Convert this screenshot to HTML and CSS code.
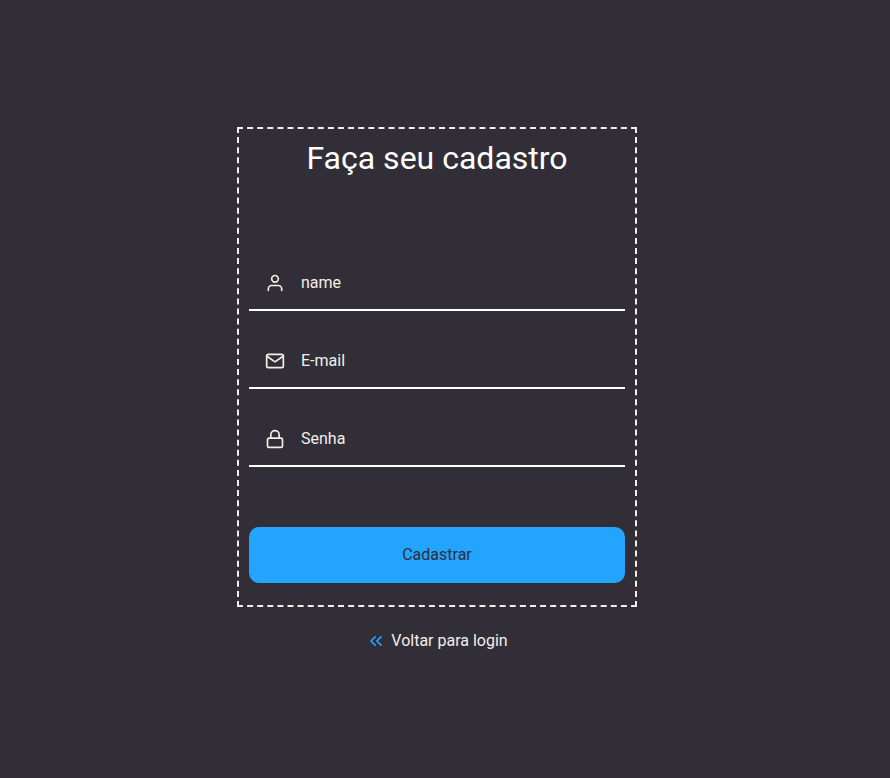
FILE: index.html
```html
<!DOCTYPE html>
<html lang="pt-BR">
<head>
  <meta charset="utf-8">
  <meta name="viewport" content="width=device-width, initial-scale=1">
  <title>Cadastro</title>
  <link rel="stylesheet" href="styles.css">
</head>
<body>
  <main class="page">
    <form class="card">
      <h1 class="title">Faça seu cadastro</h1>
      <div class="fields">
        <label class="field">
          <svg class="icon" viewBox="0 0 24 24" aria-hidden="true"><path d="M20 21v-2a4 4 0 0 0-4-4H8a4 4 0 0 0-4 4v2"/><circle cx="12" cy="7" r="4"/></svg>
          <input class="input" type="text" name="name" placeholder="name" aria-label="name">
        </label>
        <label class="field">
          <svg class="icon" viewBox="0 0 24 24" aria-hidden="true"><path d="M4 4h16c1.1 0 2 .9 2 2v12c0 1.100-.9 2-2 2H4c-1.100 0-2-.9-2-2V6c0-1.100.9-2 2-2z"/><path d="M22 6l-10 7L2 6"/></svg>
          <input class="input" type="email" name="email" placeholder="E-mail" aria-label="E-mail">
        </label>
        <label class="field">
          <svg class="icon" viewBox="0 0 24 24" aria-hidden="true"><rect x="3" y="11" width="18" height="11" rx="2"/><path d="M7 11V7a5 5 0 0 1 10 0v4"/></svg>
          <input class="input" type="password" name="password" placeholder="Senha" aria-label="Senha">
        </label>
      </div>
      <button class="submit" type="submit">Cadastrar</button>
    </form>
    <a class="back" href="#">
      <svg class="icon icon-accent" viewBox="0 0 24 24" aria-hidden="true"><path d="M11 17l-5-5 5-5"/><path d="M18 17l-5-5 5-5"/></svg>
      Voltar para login
    </a>
  </main>
</body>
</html>
```
FILE: styles.css
```css
* {
  box-sizing: border-box;
  margin: 0;
}

body {
  background: #312e38;
  color: #f4ede8;
  font: 16px/20px Roboto, sans-serif;
}

.page {
  display: flex;
  flex-direction: column;
  align-items: center;
  justify-content: center;
  gap: 24px;
  min-height: 100vh;
  padding-right: 16px;
}

.card {
  width: 100%;
  max-width: 400px;
  padding: 10px 10px 22px;
  border: 2px dashed #f4ede8;
}

.title {
  color: #fff;
  font-size: 32px;
  font-weight: 400;
  line-height: 38px;
  text-align: center;
}

.fields {
  display: grid;
  gap: 22px;
  margin: 78px 0 60px;
}

.field {
  display: flex;
  align-items: center;
  gap: 16px;
  height: 56px;
  padding: 2px 16px 0;
  border-bottom: 2px solid #fff;
}

.icon {
  flex: none;
  width: 20px;
  height: 20px;
  fill: none;
  stroke: #f4ede8;
  stroke-width: 2;
  stroke-linecap: round;
  stroke-linejoin: round;
}

.icon-accent {
  stroke: #22a4ff;
}

.input {
  flex: 1;
  min-width: 0;
  padding: 0;
  border: 0;
  outline: 0;
  background: transparent;
  color: #f4ede8;
  font: inherit;
}

.input::placeholder {
  color: #f4ede8;
  opacity: 1;
}

.submit {
  width: 100%;
  height: 56px;
  border: 0;
  border-radius: 10px;
  background: #22a4ff;
  color: #312e38;
  font: inherit;
  cursor: pointer;
}

.back {
  display: flex;
  align-items: center;
  gap: 5px;
  color: #f4ede8;
  text-decoration: none;
}
```
